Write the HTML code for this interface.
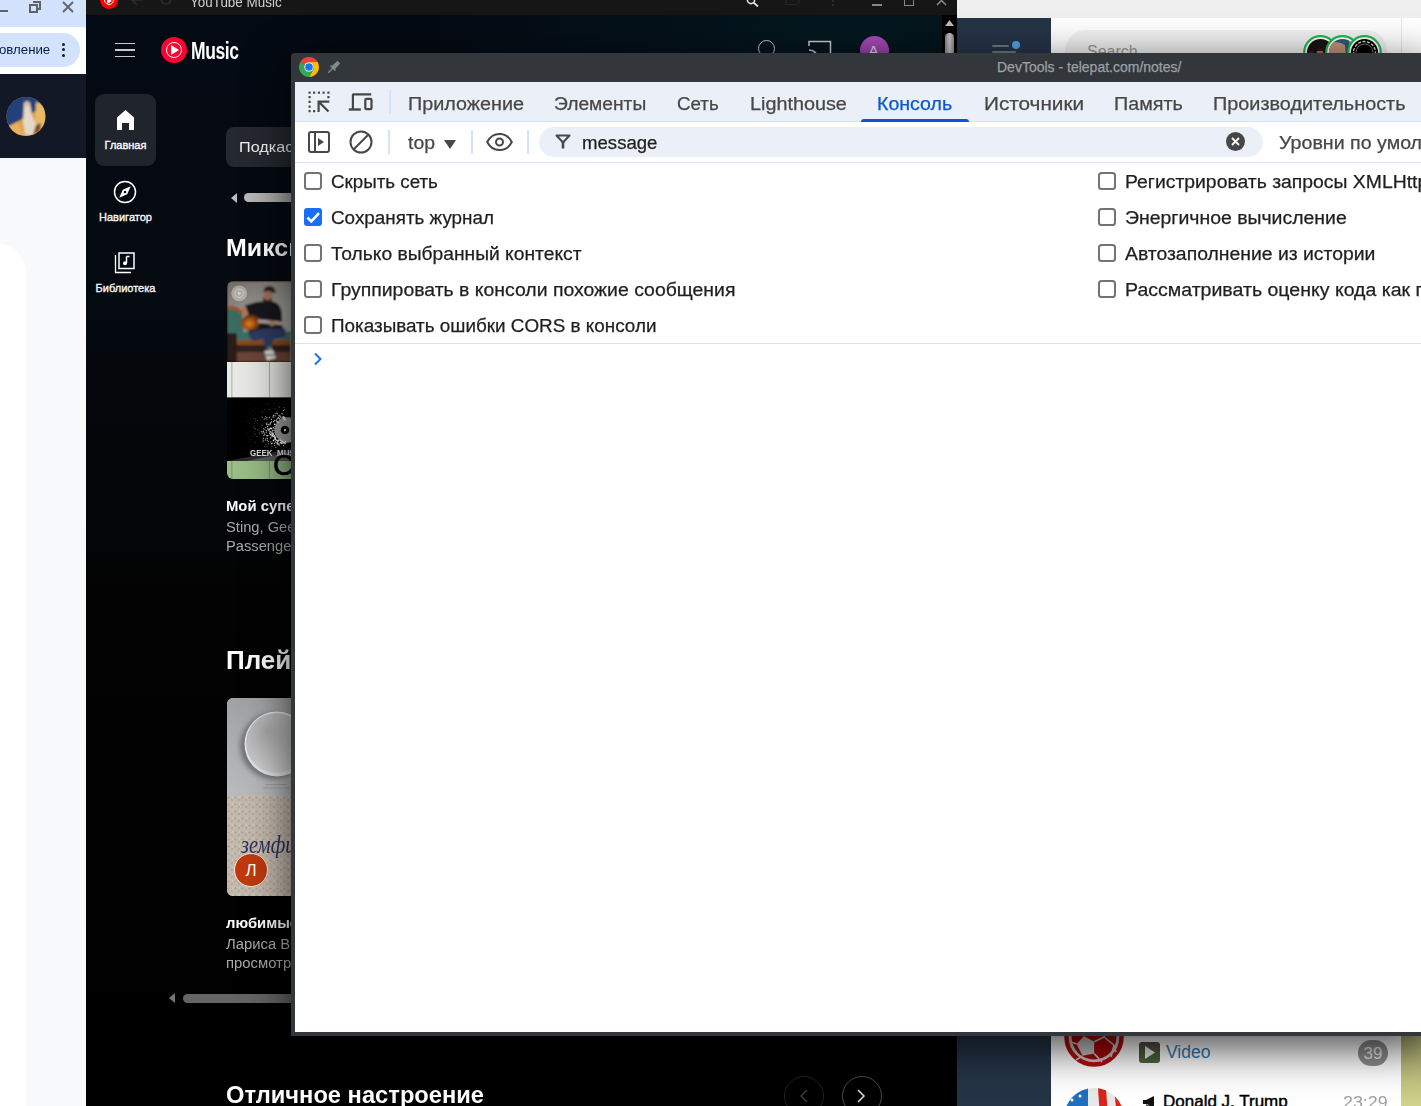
<!DOCTYPE html>
<html><head><meta charset="utf-8">
<style>
*{margin:0;padding:0;box-sizing:border-box}
html,body{width:1421px;height:1106px;overflow:hidden;background:#000;font-family:"Liberation Sans",sans-serif}
.a{position:absolute}
.t{position:absolute;white-space:nowrap;line-height:1}
</style></head><body>

<!-- ============ LEFT CHROME WINDOW ============ -->
<div class="a" style="left:0;top:0;width:86px;height:1106px;background:#f8f9fb;overflow:hidden" id="chromeL">
  <div class="a" style="left:0;top:0;width:86px;height:27px;background:#d3e3fd"></div>
  <div class="a" style="left:0;top:27px;width:86px;height:47px;background:#fff;border-top-right-radius:8px"></div>
  <div class="a" style="left:-40px;top:33px;width:120px;height:34px;background:#d3e3fd;border-radius:17px"></div>
  <div class="t" style="left:-1px;top:43px;font-size:13.5px;color:#041e49;transform:scaleX(.98);transform-origin:0 0">овление</div>
  <div class="a" style="left:62px;top:43px;width:3px;height:3px;border-radius:2px;background:#041e49"></div>
  <div class="a" style="left:62px;top:48px;width:3px;height:3px;border-radius:2px;background:#041e49"></div>
  <div class="a" style="left:62px;top:54px;width:3px;height:3px;border-radius:2px;background:#041e49"></div>
  <!-- window controls -->
  <div class="a" style="left:0;top:10px;width:8px;height:2px;background:#5f6368"></div>
  <svg class="a" style="left:29px;top:1px" width="12" height="12" viewBox="0 0 12 12"><path d="M4 1h7v7h-2M1 4h7v7H1z" fill="none" stroke="#5f6368" stroke-width="2"/></svg>
  <svg class="a" style="left:62px;top:1px" width="12" height="12" viewBox="0 0 12 12"><path d="M1 1l10 10M11 1L1 11" stroke="#5f6368" stroke-width="1.8"/></svg>
  <!-- dark band -->
  <div class="a" style="left:0;top:74px;width:86px;height:84px;background:#121826"></div>
  <svg class="a" style="left:6px;top:97px" width="40" height="40" viewBox="0 0 40 40"><defs><clipPath id="av"><circle cx="20" cy="19.5" r="19.4"/></clipPath><filter id="avb"><feGaussianBlur stdDeviation="1"/></filter></defs><g clip-path="url(#av)"><rect width="40" height="40" fill="#d9a250"/><g filter="url(#avb)"><path d="M-2 -2H40V8L30 14L12 24L-2 32z" fill="#24407a"/><path d="M30 5L40 8V40H28z" fill="#e8b868"/><path d="M18 6Q21 3 24 6L26 18L30 28L27 38H19L17 26z" fill="#e6d8c8"/><circle cx="21" cy="7" r="2.8" fill="#d8c0a0"/><path d="M30 28L35 26L34 34L27 38z" fill="#7a4a20"/><path d="M0 30L12 26L18 40H0z" fill="#e8b060"/></g></g></svg>
  <div class="a" style="left:-60px;top:244px;width:86px;height:900px;background:#fff;border-radius:28px"></div>
</div>

<!-- ============ YOUTUBE MUSIC ============ -->
<div class="a" style="left:86px;top:0;width:871px;height:1106px;overflow:hidden;background:linear-gradient(180deg,#040a14 0,#050a10 300px,#030303 600px,#000 1106px)" id="ytm">
  <div class="a" style="left:0;top:0;width:871px;height:400px;background:radial-gradient(ellipse 420px 260px at 760px 30px,rgba(4,28,34,.75),rgba(4,20,28,0) 100%)"></div>
  <div class="a" style="left:0;top:0;width:871px;height:15px;background:#161616"></div>
  <div class="a" style="left:14px;top:-9px;width:18px;height:18px;border-radius:50%;background:#f00"></div>
  <div class="a" style="left:18px;top:-5px;width:10px;height:10px;border-radius:50%;border:1px solid #fff"></div>
  <svg class="a" style="left:21px;top:-2px" width="6" height="6" viewBox="0 0 6 6"><path d="M0 0L5 3L0 6z" fill="#fff"/></svg>
  <svg class="a" style="left:44px;top:-6px" width="14" height="12" viewBox="0 0 14 12"><path d="M13 6H2M7 1L2 6l5 5" fill="none" stroke="#2e2e2e" stroke-width="1.5"/></svg>
  <svg class="a" style="left:73px;top:-6px" width="14" height="12" viewBox="0 0 14 12"><circle cx="7" cy="5" r="5" fill="none" stroke="#2e2e2e" stroke-width="1.5"/></svg>
  <div class="t" style="left:104px;top:-5px;font-size:14px;color:#d0d0d0;transform:scaleX(.96);transform-origin:0 0">YouTube Music</div>
  <svg class="a" style="left:660px;top:-4px" width="14" height="11" viewBox="0 0 14 11"><circle cx="5" cy="4" r="3.6" fill="none" stroke="#ddd" stroke-width="1.6"/><path d="M7.5 6.5L12 10.5" stroke="#ddd" stroke-width="1.8"/></svg>
  <div class="a" style="left:700px;top:-6px;width:14px;height:11px;border:1.5px solid #262626;border-radius:2px;transform:skewX(-15deg)"></div>
  <div class="a" style="left:746px;top:0;width:2px;height:2px;background:#2a2a2a"></div><div class="a" style="left:746px;top:4px;width:2px;height:2px;background:#2a2a2a"></div>
  <div class="a" style="left:786px;top:4px;width:10px;height:1.5px;background:#888"></div>
  <div class="a" style="left:818px;top:-6px;width:10px;height:12px;border:1.5px solid #888"></div>
  <svg class="a" style="left:850px;top:-5px" width="11" height="11" viewBox="0 0 11 11"><path d="M1 1l9 9M10 1L1 10" stroke="#888" stroke-width="1.5"/></svg>
  <!-- hamburger -->
  <div class="a" style="left:29px;top:42.5px;width:20px;height:1.6px;background:#c8c8c8"></div>
  <div class="a" style="left:29px;top:49px;width:20px;height:1.6px;background:#c8c8c8"></div>
  <div class="a" style="left:29px;top:55.5px;width:20px;height:1.6px;background:#c8c8c8"></div>
  <!-- logo -->
  <div class="a" style="left:75px;top:37px;width:26px;height:26px;border-radius:50%;background:#ff0033"></div>
  <div class="a" style="left:80px;top:42px;width:16px;height:16px;border-radius:50%;border:1px solid #fff"></div>
  <svg class="a" style="left:85px;top:45px" width="9" height="10" viewBox="0 0 9 10"><path d="M0 0L8 5L0 10z" fill="#fff"/></svg>
  <div class="t" style="left:105px;top:40px;font-size:23px;font-weight:bold;color:#fff;transform:scaleX(0.76);transform-origin:0 0;letter-spacing:-0.5px">Music</div>
  <!-- sidebar -->
  <div class="a" style="left:9px;top:94px;width:61px;height:72px;border-radius:9px;background:#20242c"></div>
  <svg class="a" style="left:30px;top:110px" width="19" height="20" viewBox="0 0 19 20"><path d="M9.5 0L18 7.5V20H13V13H6V20H1V7.5z" fill="#fff"/></svg>
  <div class="t" style="left:0;width:79px;text-align:center;top:140px;font-size:11px;font-weight:normal;-webkit-text-stroke:0.35px #fff;color:#fff">Главная</div>
  <svg class="a" style="left:27px;top:180px" width="24" height="24" viewBox="0 0 24 24"><circle cx="12" cy="12" r="10.5" fill="none" stroke="#fff" stroke-width="1.5"/><path d="M17.8 6.2L14.2 14.2L6.2 17.8L9.8 9.8z" fill="#fff"/><circle cx="12" cy="12" r="1.3" fill="#0a0e14"/></svg>
  <div class="t" style="left:0;width:79px;text-align:center;top:212px;font-size:11px;font-weight:normal;-webkit-text-stroke:0.35px #fff;color:#eee">Навигатор</div>
  <svg class="a" style="left:28px;top:252px" width="22" height="22" viewBox="0 0 22 22"><path d="M1.5 3v17.5H17" fill="none" stroke="#fff" stroke-width="1.3"/><rect x="5" y="1" width="15" height="15.5" fill="none" stroke="#fff" stroke-width="1.5"/><path d="M12.5 4.5v6.5" stroke="#fff" stroke-width="1.5"/><path d="M12.5 4.5h3" stroke="#fff" stroke-width="1.5"/><circle cx="11" cy="11.3" r="2" fill="#fff"/></svg>
  <div class="t" style="left:0;width:79px;text-align:center;top:283px;font-size:11px;font-weight:normal;-webkit-text-stroke:0.35px #fff;color:#eee">Библиотека</div>

  <!-- chip -->
  <div class="a" style="left:140px;top:127px;width:120px;height:40px;border-radius:8px;background:#25282e"></div>
  <div class="t" style="left:153px;top:139px;font-size:15px;color:#f0f0f0;transform:scaleX(1.08);transform-origin:0 0">Подкасты</div>
  <!-- scroll bar top -->
  <svg class="a" style="left:145px;top:193px" width="6" height="10" viewBox="0 0 6 10"><path d="M6 0V10L0 5z" fill="#bbb"/></svg>
  <div class="a" style="left:158px;top:193px;width:200px;height:9px;border-radius:5px;background:linear-gradient(90deg,#b8b8b8,#6a6a6a)"></div>
  <!-- Микс heading -->
  <div class="t" style="left:140px;top:236px;font-size:24px;font-weight:bold;color:#fff;transform:scaleX(1.04);transform-origin:0 0">Миксы</div>
  <!-- card 1 -->
  <div class="a" style="left:141px;top:281px;width:160px;height:198px;border-radius:6px;overflow:hidden;background:#000">
  <svg class="a" style="left:0;top:0" width="160" height="198" viewBox="0 0 160 198">
    <defs>
      <linearGradient id="wall" x1="0" y1="0" x2="1" y2="1"><stop offset="0" stop-color="#6f6a63"/><stop offset=".35" stop-color="#a3a39e"/><stop offset="1" stop-color="#b2b2ad"/></linearGradient>
      <radialGradient id="gtr" cx=".4" cy=".55" r=".65"><stop offset="0" stop-color="#e08a28"/><stop offset=".45" stop-color="#a8500e"/><stop offset="1" stop-color="#2a1406"/></radialGradient>
      <linearGradient id="pan" x1="0" y1="0" x2="1" y2="0"><stop offset="0" stop-color="#e9eae5"/><stop offset=".6" stop-color="#dcdcd8"/><stop offset="1" stop-color="#8a8a88"/></linearGradient>
      <radialGradient id="dots" cx="1" cy=".5" r=".9"><stop offset="0" stop-color="#f0f0f0"/><stop offset=".5" stop-color="#b0b0b0"/><stop offset=".8" stop-color="#444"/><stop offset="1" stop-color="#000"/></radialGradient>
      <linearGradient id="grn" x1="0" y1="0" x2="1" y2="0"><stop offset="0" stop-color="#9ac088"/><stop offset="1" stop-color="#7c9c6d"/></linearGradient>
    </defs>
    <defs><filter id="bl" x="-5%" y="-5%" width="110%" height="110%"><feGaussianBlur stdDeviation=".8"/></filter></defs><g filter="url(#bl)"><rect width="160" height="81" fill="url(#wall)"/>
    <path d="M0 28Q8 25 15.3 34L17 58H0z" fill="#3b6a5f"/>
    <path d="M0 27Q9 24 15.3 33" stroke="#a0501a" stroke-width="3.2" fill="none"/>
    <rect x="0" y="50.5" width="64" height="8.7" fill="#3e6e66"/>
    <rect x="6" y="59" width="58" height="5" fill="#8a4a1c"/>
    <rect x="0" y="64" width="64" height="7" fill="#2e2420"/>
    <rect x="0" y="71" width="64" height="10" fill="#6a4438"/>
    <path d="M0 52H10V81H0z" fill="#2a1c14"/>
    <path d="M17.7 24.5Q30 20 36 20.5L46 20.5Q53 22 54.6 30L56 50L22 52L19 38z" fill="#18181a"/>
    <path d="M13.7 27L18.5 25L24 40L19.5 42z" fill="#a87a62"/>
    <path d="M36.5 11Q37 4 43 5Q49 6 48.5 12L46 12Q43 9 38 11z" fill="#2a1a12"/>
    <path d="M36 11.5Q41 9 46 12L45.2 19L41 21L36 18z" fill="#a07058"/>
    <path d="M35.5 16Q40 22 45 17L44.4 21Q40 23 36.5 20.6z" fill="#2e1e14"/>
    <ellipse cx="24" cy="41.5" rx="10" ry="8" fill="url(#gtr)" transform="rotate(-15 24 41.5)"/>
    <path d="M31 40L61 43" stroke="#b0a09a" stroke-width="3.6"/>
    <circle cx="45" cy="42.6" r="2.6" fill="#a87a62"/>
    <path d="M20.8 53.6Q30 47 42 47.4L58.6 47.4L57.8 56L47 58L43 67.8L38 66L36 58L26 60z" fill="#2e3a60"/>
    <path d="M40.5 65.5L45.2 65.5L45 70.2L40 70.2z" fill="#6a7a6a"/>
    <path d="M37.3 70L46 69L49 77L40 79.6z" fill="#d4d8d0"/>
    <path d="M38 74L48 74" stroke="#333" stroke-width="1"/>
</g>
    <circle cx="12.2" cy="12.3" r="7.9" fill="#fff" fill-opacity=".35"/>
    <circle cx="12.2" cy="12.3" r="4.3" fill="none" stroke="#fff" stroke-opacity=".45" stroke-width=".8"/>
    <path d="M11 10.2L14.2 12.3L11 14.4z" fill="#fff" fill-opacity=".5"/>
    <rect y="81" width="160" height="35.5" fill="url(#pan)"/>
    <rect x="4.5" y="81" width=".8" height="35.5" fill="#999"/>
    <rect x="42" y="81" width=".8" height="35.5" fill="#999"/>
    <rect y="116" width="160" height="1.5" fill="#555"/>
    <rect y="117" width="160" height="63" fill="#000"/>
    <path d="M0 180L64 168V180z" fill="#555" opacity=".5"/>
    <path d="M20 180L64 171V180z" fill="#888" opacity=".5"/>
    <circle cx="60" cy="149" r="12.5" fill="#9a9a9a"/>
    <circle cx="60" cy="149" r="12.5" fill="none" stroke="#bbb" stroke-width="1" stroke-dasharray="1 1"/>
    <rect x="35.6" y="160.4" width="0.8" height="0.8" fill="#fff" fill-opacity="0.70"/>
    <rect x="41.8" y="147.5" width="1.2" height="1.2" fill="#fff" fill-opacity="0.92"/>
    <rect x="41.2" y="148.7" width="1.2" height="1.2" fill="#fff" fill-opacity="0.91"/>
    <rect x="55.9" y="164.0" width="1.1" height="1.1" fill="#fff" fill-opacity="0.88"/>
    <rect x="53.7" y="161.0" width="1.2" height="1.2" fill="#fff" fill-opacity="0.95"/>
    <rect x="42.0" y="152.2" width="1.2" height="1.2" fill="#fff" fill-opacity="0.92"/>
    <rect x="45.1" y="161.6" width="1.0" height="1.0" fill="#fff" fill-opacity="0.84"/>
    <rect x="27.9" y="138.5" width="0.6" height="0.6" fill="#fff" fill-opacity="0.57"/>
    <rect x="39.6" y="154.1" width="1.1" height="1.1" fill="#fff" fill-opacity="0.85"/>
    <rect x="40.8" y="160.1" width="1.0" height="1.0" fill="#fff" fill-opacity="0.80"/>
    <rect x="48.0" y="166.0" width="0.9" height="0.9" fill="#fff" fill-opacity="0.78"/>
    <rect x="46.0" y="133.8" width="1.0" height="1.0" fill="#fff" fill-opacity="0.80"/>
    <rect x="36.0" y="156.7" width="0.9" height="0.9" fill="#fff" fill-opacity="0.75"/>
    <rect x="40.3" y="146.8" width="1.1" height="1.1" fill="#fff" fill-opacity="0.89"/>
    <rect x="49.1" y="158.8" width="1.2" height="1.2" fill="#fff" fill-opacity="0.95"/>
    <rect x="36.7" y="137.8" width="0.9" height="0.9" fill="#fff" fill-opacity="0.73"/>
    <rect x="39.9" y="144.9" width="1.1" height="1.1" fill="#fff" fill-opacity="0.87"/>
    <rect x="36.8" y="151.6" width="1.0" height="1.0" fill="#fff" fill-opacity="0.81"/>
    <rect x="25.6" y="129.7" width="0.4" height="0.4" fill="#fff" fill-opacity="0.41"/>
    <rect x="49.8" y="132.6" width="1.0" height="1.0" fill="#fff" fill-opacity="0.81"/>
    <rect x="40.5" y="136.3" width="0.9" height="0.9" fill="#fff" fill-opacity="0.77"/>
    <rect x="45.4" y="151.7" width="1.3" height="1.3" fill="#fff" fill-opacity="0.99"/>
    <rect x="36.1" y="149.6" width="1.0" height="1.0" fill="#fff" fill-opacity="0.80"/>
    <rect x="22.5" y="142.1" width="0.5" height="0.5" fill="#fff" fill-opacity="0.48"/>
    <rect x="49.5" y="131.9" width="1.0" height="1.0" fill="#fff" fill-opacity="0.79"/>
    <rect x="24.0" y="140.4" width="0.5" height="0.5" fill="#fff" fill-opacity="0.50"/>
    <rect x="54.4" y="131.9" width="1.0" height="1.0" fill="#fff" fill-opacity="0.82"/>
    <rect x="42.5" y="150.0" width="1.2" height="1.2" fill="#fff" fill-opacity="0.94"/>
    <rect x="43.9" y="140.4" width="1.1" height="1.1" fill="#fff" fill-opacity="0.89"/>
    <rect x="19.9" y="133.3" width="0.4" height="0.4" fill="#fff" fill-opacity="0.35"/>
    <rect x="47.1" y="156.2" width="1.3" height="1.3" fill="#fff" fill-opacity="0.97"/>
    <rect x="44.6" y="153.2" width="1.2" height="1.2" fill="#fff" fill-opacity="0.96"/>
    <rect x="42.5" y="150.6" width="1.2" height="1.2" fill="#fff" fill-opacity="0.93"/>
    <rect x="49.5" y="161.0" width="1.2" height="1.2" fill="#fff" fill-opacity="0.91"/>
    <rect x="47.1" y="138.9" width="1.2" height="1.2" fill="#fff" fill-opacity="0.92"/>
    <rect x="52.9" y="158.8" width="1.3" height="1.3" fill="#fff" fill-opacity="0.99"/>
    <rect x="46.7" y="127.2" width="0.7" height="0.7" fill="#fff" fill-opacity="0.65"/>
    <rect x="51.2" y="134.3" width="1.1" height="1.1" fill="#fff" fill-opacity="0.86"/>
    <rect x="46.6" y="134.2" width="1.0" height="1.0" fill="#fff" fill-opacity="0.81"/>
    <rect x="36.3" y="153.9" width="1.0" height="1.0" fill="#fff" fill-opacity="0.79"/>
    <rect x="19.3" y="164.2" width="0.4" height="0.4" fill="#fff" fill-opacity="0.35"/>
    <rect x="50.7" y="158.8" width="1.3" height="1.3" fill="#fff" fill-opacity="0.97"/>
    <rect x="33.7" y="149.9" width="0.9" height="0.9" fill="#fff" fill-opacity="0.75"/>
    <rect x="45.7" y="146.1" width="1.3" height="1.3" fill="#fff" fill-opacity="1.00"/>
    <rect x="44.4" y="151.9" width="1.2" height="1.2" fill="#fff" fill-opacity="0.97"/>
    <rect x="34.2" y="135.6" width="0.7" height="0.7" fill="#fff" fill-opacity="0.65"/>
    <rect x="27.5" y="147.8" width="0.7" height="0.7" fill="#fff" fill-opacity="0.61"/>
    <rect x="52.2" y="134.2" width="1.1" height="1.1" fill="#fff" fill-opacity="0.87"/>
    <rect x="31.4" y="119.2" width="0.4" height="0.4" fill="#fff" fill-opacity="0.35"/>
    <rect x="40.3" y="154.1" width="1.1" height="1.1" fill="#fff" fill-opacity="0.87"/>
    <rect x="42.4" y="143.2" width="1.1" height="1.1" fill="#fff" fill-opacity="0.90"/>
    <rect x="49.6" y="161.4" width="1.1" height="1.1" fill="#fff" fill-opacity="0.90"/>
    <rect x="46.6" y="154.2" width="1.3" height="1.3" fill="#fff" fill-opacity="0.99"/>
    <rect x="52.2" y="158.4" width="1.3" height="1.3" fill="#fff" fill-opacity="1.00"/>
    <rect x="53.3" y="160.8" width="1.2" height="1.2" fill="#fff" fill-opacity="0.95"/>
    <rect x="52.1" y="137.2" width="1.2" height="1.2" fill="#fff" fill-opacity="0.94"/>
    <rect x="39.3" y="143.2" width="1.0" height="1.0" fill="#fff" fill-opacity="0.84"/>
    <rect x="38.0" y="157.6" width="1.0" height="1.0" fill="#fff" fill-opacity="0.79"/>
    <rect x="26.1" y="161.0" width="0.5" height="0.5" fill="#fff" fill-opacity="0.51"/>
    <rect x="57.3" y="120.5" width="0.5" height="0.5" fill="#fff" fill-opacity="0.53"/>
    <rect x="38.7" y="150.7" width="1.1" height="1.1" fill="#fff" fill-opacity="0.85"/>
    <rect x="53.8" y="159.5" width="1.3" height="1.3" fill="#fff" fill-opacity="0.98"/>
    <rect x="44.4" y="155.1" width="1.2" height="1.2" fill="#fff" fill-opacity="0.94"/>
    <rect x="49.7" y="162.8" width="1.1" height="1.1" fill="#fff" fill-opacity="0.87"/>
    <rect x="26.2" y="145.4" width="0.6" height="0.6" fill="#fff" fill-opacity="0.58"/>
    <rect x="56.9" y="135.8" width="1.2" height="1.2" fill="#fff" fill-opacity="0.93"/>
    <rect x="51.0" y="136.4" width="1.2" height="1.2" fill="#fff" fill-opacity="0.91"/>
    <rect x="35.6" y="157.2" width="0.9" height="0.9" fill="#fff" fill-opacity="0.74"/>
    <rect x="50.3" y="160.0" width="1.2" height="1.2" fill="#fff" fill-opacity="0.94"/>
    <rect x="37.3" y="128.5" width="0.6" height="0.6" fill="#fff" fill-opacity="0.57"/>
    <rect x="42.9" y="156.4" width="1.1" height="1.1" fill="#fff" fill-opacity="0.89"/>
    <rect x="47.8" y="132.1" width="0.9" height="0.9" fill="#fff" fill-opacity="0.78"/>
    <rect x="28.4" y="126.1" width="0.4" height="0.4" fill="#fff" fill-opacity="0.39"/>
    <rect x="56.7" y="160.8" width="1.2" height="1.2" fill="#fff" fill-opacity="0.96"/>
    <rect x="56.7" y="161.3" width="1.2" height="1.2" fill="#fff" fill-opacity="0.95"/>
    <rect x="37.5" y="137.3" width="0.9" height="0.9" fill="#fff" fill-opacity="0.73"/>
    <rect x="57.1" y="128.4" width="0.9" height="0.9" fill="#fff" fill-opacity="0.73"/>
    <rect x="55.2" y="132.5" width="1.0" height="1.0" fill="#fff" fill-opacity="0.84"/>
    <rect x="44.1" y="162.2" width="1.0" height="1.0" fill="#fff" fill-opacity="0.81"/>
    <rect x="47.0" y="161.8" width="1.1" height="1.1" fill="#fff" fill-opacity="0.86"/>
    <rect x="47.4" y="122.1" width="0.5" height="0.5" fill="#fff" fill-opacity="0.53"/>
    <rect x="40.8" y="123.0" width="0.5" height="0.5" fill="#fff" fill-opacity="0.50"/>
    <rect x="48.8" y="138.5" width="1.2" height="1.2" fill="#fff" fill-opacity="0.93"/>
    <rect x="31.1" y="121.8" width="0.4" height="0.4" fill="#fff" fill-opacity="0.35"/>
    <rect x="42.0" y="135.8" width="1.0" height="1.0" fill="#fff" fill-opacity="0.78"/>
    <rect x="49.4" y="139.9" width="1.3" height="1.3" fill="#fff" fill-opacity="0.97"/>
    <rect x="35.4" y="159.8" width="0.8" height="0.8" fill="#fff" fill-opacity="0.71"/>
    <rect x="22.7" y="158.3" width="0.5" height="0.5" fill="#fff" fill-opacity="0.47"/>
    <rect x="47.2" y="164.0" width="1.0" height="1.0" fill="#fff" fill-opacity="0.82"/>
    <rect x="34.6" y="121.2" width="0.4" height="0.4" fill="#fff" fill-opacity="0.38"/>
    <rect x="39.5" y="156.8" width="1.0" height="1.0" fill="#fff" fill-opacity="0.82"/>
    <rect x="57.3" y="161.6" width="1.2" height="1.2" fill="#fff" fill-opacity="0.94"/>
    <rect x="55.8" y="129.0" width="0.9" height="0.9" fill="#fff" fill-opacity="0.75"/>
    <rect x="52.1" y="125.9" width="0.7" height="0.7" fill="#fff" fill-opacity="0.65"/>
    <rect x="25.2" y="154.7" width="0.6" height="0.6" fill="#fff" fill-opacity="0.55"/>
    <rect x="46.7" y="158.2" width="1.2" height="1.2" fill="#fff" fill-opacity="0.93"/>
    <rect x="34.7" y="143.6" width="0.9" height="0.9" fill="#fff" fill-opacity="0.75"/>
    <rect x="43.4" y="160.4" width="1.0" height="1.0" fill="#fff" fill-opacity="0.84"/>
    <rect x="53.3" y="135.7" width="1.2" height="1.2" fill="#fff" fill-opacity="0.91"/>
    <rect x="28.2" y="161.2" width="0.6" height="0.6" fill="#fff" fill-opacity="0.55"/>
    <rect x="52.6" y="134.7" width="1.1" height="1.1" fill="#fff" fill-opacity="0.88"/>
    <rect x="29.7" y="154.9" width="0.7" height="0.7" fill="#fff" fill-opacity="0.64"/>
    <rect x="36.1" y="147.2" width="1.0" height="1.0" fill="#fff" fill-opacity="0.80"/>
    <rect x="28.2" y="147.2" width="0.7" height="0.7" fill="#fff" fill-opacity="0.63"/>
    <rect x="50.0" y="159.2" width="1.2" height="1.2" fill="#fff" fill-opacity="0.96"/>
    <rect x="57.8" y="161.9" width="1.2" height="1.2" fill="#fff" fill-opacity="0.93"/>
    <rect x="36.0" y="150.5" width="1.0" height="1.0" fill="#fff" fill-opacity="0.79"/>
    <rect x="38.2" y="135.0" width="0.8" height="0.8" fill="#fff" fill-opacity="0.71"/>
    <rect x="40.4" y="148.2" width="1.1" height="1.1" fill="#fff" fill-opacity="0.89"/>
    <rect x="43.9" y="147.0" width="1.2" height="1.2" fill="#fff" fill-opacity="0.96"/>
    <rect x="38.3" y="145.9" width="1.0" height="1.0" fill="#fff" fill-opacity="0.84"/>
    <rect x="45.8" y="159.2" width="1.1" height="1.1" fill="#fff" fill-opacity="0.90"/>
    <rect x="18.1" y="148.2" width="0.4" height="0.4" fill="#fff" fill-opacity="0.41"/>
    <rect x="43.4" y="146.6" width="1.2" height="1.2" fill="#fff" fill-opacity="0.95"/>
    <rect x="28.0" y="139.9" width="0.6" height="0.6" fill="#fff" fill-opacity="0.58"/>
    <rect x="47.0" y="142.7" width="1.3" height="1.3" fill="#fff" fill-opacity="0.99"/>
    <rect x="27.7" y="152.8" width="0.7" height="0.7" fill="#fff" fill-opacity="0.61"/>
    <rect x="55.0" y="135.6" width="1.2" height="1.2" fill="#fff" fill-opacity="0.92"/>
    <rect x="25.5" y="129.6" width="0.4" height="0.4" fill="#fff" fill-opacity="0.40"/>
    <rect x="51.1" y="163.2" width="1.1" height="1.1" fill="#fff" fill-opacity="0.87"/>
    <rect x="47.8" y="157.9" width="1.2" height="1.2" fill="#fff" fill-opacity="0.95"/>
    <rect x="46.1" y="119.8" width="0.4" height="0.4" fill="#fff" fill-opacity="0.46"/>
    <rect x="49.8" y="161.9" width="1.1" height="1.1" fill="#fff" fill-opacity="0.89"/>
    <rect x="49.5" y="130.7" width="0.9" height="0.9" fill="#fff" fill-opacity="0.76"/>
    <rect x="55.8" y="136.8" width="1.2" height="1.2" fill="#fff" fill-opacity="0.95"/>
    <rect x="49.7" y="137.2" width="1.2" height="1.2" fill="#fff" fill-opacity="0.92"/>
    <rect x="39.9" y="157.3" width="1.0" height="1.0" fill="#fff" fill-opacity="0.82"/>
    <rect x="44.5" y="164.8" width="0.9" height="0.9" fill="#fff" fill-opacity="0.77"/>
    <rect x="42.7" y="146.8" width="1.2" height="1.2" fill="#fff" fill-opacity="0.94"/>
    <rect x="46.1" y="154.7" width="1.3" height="1.3" fill="#fff" fill-opacity="0.98"/>
    <rect x="40.9" y="143.2" width="1.1" height="1.1" fill="#fff" fill-opacity="0.87"/>
    <rect x="57.4" y="138.2" width="1.3" height="1.3" fill="#fff" fill-opacity="0.99"/>
    <rect x="45.6" y="135.9" width="1.0" height="1.0" fill="#fff" fill-opacity="0.84"/>
    <rect x="47.6" y="156.8" width="1.3" height="1.3" fill="#fff" fill-opacity="0.97"/>
    <rect x="56.1" y="161.3" width="1.2" height="1.2" fill="#fff" fill-opacity="0.95"/>
    <rect x="21.2" y="156.6" width="0.4" height="0.4" fill="#fff" fill-opacity="0.45"/>
    <rect x="37.4" y="165.1" width="0.8" height="0.8" fill="#fff" fill-opacity="0.66"/>
    <rect x="39.5" y="137.9" width="0.9" height="0.9" fill="#fff" fill-opacity="0.78"/>
    <rect x="37.2" y="153.1" width="1.0" height="1.0" fill="#fff" fill-opacity="0.81"/>
    <rect x="45.6" y="134.7" width="1.0" height="1.0" fill="#fff" fill-opacity="0.81"/>
    <rect x="53.7" y="162.0" width="1.2" height="1.2" fill="#fff" fill-opacity="0.92"/>
    <rect x="50.8" y="136.0" width="1.1" height="1.1" fill="#fff" fill-opacity="0.90"/>
    <rect x="34.7" y="151.8" width="0.9" height="0.9" fill="#fff" fill-opacity="0.76"/>
    <rect x="51.2" y="124.9" width="0.7" height="0.7" fill="#fff" fill-opacity="0.62"/>
    <rect x="38.5" y="163.4" width="0.8" height="0.8" fill="#fff" fill-opacity="0.71"/>
    <rect x="39.7" y="165.3" width="0.8" height="0.8" fill="#fff" fill-opacity="0.69"/>
    <rect x="52.8" y="161.0" width="1.2" height="1.2" fill="#fff" fill-opacity="0.94"/>
    <rect x="47.9" y="160.3" width="1.1" height="1.1" fill="#fff" fill-opacity="0.90"/>
    <rect x="39.8" y="159.1" width="1.0" height="1.0" fill="#fff" fill-opacity="0.80"/>
    <rect x="38.8" y="149.0" width="1.1" height="1.1" fill="#fff" fill-opacity="0.86"/>
    <rect x="43.0" y="147.0" width="1.2" height="1.2" fill="#fff" fill-opacity="0.95"/>
    <rect x="51.9" y="163.5" width="1.1" height="1.1" fill="#fff" fill-opacity="0.87"/>
    <rect x="42.0" y="128.3" width="0.7" height="0.7" fill="#fff" fill-opacity="0.63"/>
    <rect x="47.9" y="134.4" width="1.0" height="1.0" fill="#fff" fill-opacity="0.83"/>
    <rect x="22.9" y="159.1" width="0.4" height="0.4" fill="#fff" fill-opacity="0.47"/>
    <rect x="57.2" y="137.7" width="1.3" height="1.3" fill="#fff" fill-opacity="0.98"/>
    <rect x="35.9" y="158.8" width="0.9" height="0.9" fill="#fff" fill-opacity="0.73"/>
    <rect x="26.5" y="137.2" width="0.5" height="0.5" fill="#fff" fill-opacity="0.52"/>
    <rect x="43.0" y="152.8" width="1.2" height="1.2" fill="#fff" fill-opacity="0.93"/>
    <rect x="51.2" y="161.9" width="1.1" height="1.1" fill="#fff" fill-opacity="0.90"/>
    <rect x="55.1" y="159.8" width="1.3" height="1.3" fill="#fff" fill-opacity="0.98"/>
    <rect x="23.6" y="132.1" width="0.4" height="0.4" fill="#fff" fill-opacity="0.41"/>
    <rect x="47.7" y="156.0" width="1.3" height="1.3" fill="#fff" fill-opacity="0.99"/>
    <rect x="32.2" y="151.7" width="0.8" height="0.8" fill="#fff" fill-opacity="0.71"/>
    <rect x="56.0" y="135.2" width="1.2" height="1.2" fill="#fff" fill-opacity="0.91"/>
    <rect x="55.9" y="129.1" width="0.9" height="0.9" fill="#fff" fill-opacity="0.75"/>
    <rect x="56.3" y="135.7" width="1.2" height="1.2" fill="#fff" fill-opacity="0.92"/>
    <rect x="47.2" y="155.1" width="1.3" height="1.3" fill="#fff" fill-opacity="0.99"/>
    <rect x="45.7" y="153.0" width="1.3" height="1.3" fill="#fff" fill-opacity="0.99"/>
    <rect x="34.6" y="150.5" width="0.9" height="0.9" fill="#fff" fill-opacity="0.77"/>
    <rect x="45.2" y="148.8" width="1.3" height="1.3" fill="#fff" fill-opacity="1.00"/>
    <rect x="57.8" y="160.0" width="1.3" height="1.3" fill="#fff" fill-opacity="0.99"/>
    <rect x="39.4" y="154.0" width="1.1" height="1.1" fill="#fff" fill-opacity="0.85"/>
    <rect x="48.3" y="158.0" width="1.2" height="1.2" fill="#fff" fill-opacity="0.96"/>
    <rect x="20.4" y="140.4" width="0.4" height="0.4" fill="#fff" fill-opacity="0.43"/>
    <rect x="42.6" y="142.1" width="1.1" height="1.1" fill="#fff" fill-opacity="0.89"/>
    <rect x="39.1" y="136.4" width="0.9" height="0.9" fill="#fff" fill-opacity="0.75"/>
    <rect x="37.8" y="159.2" width="0.9" height="0.9" fill="#fff" fill-opacity="0.76"/>
    <rect x="56.7" y="126.0" width="0.8" height="0.8" fill="#fff" fill-opacity="0.67"/>
    <rect x="27.8" y="137.0" width="0.6" height="0.6" fill="#fff" fill-opacity="0.55"/>
    <rect x="19.5" y="135.5" width="0.4" height="0.4" fill="#fff" fill-opacity="0.37"/>
    <rect x="46.1" y="140.1" width="1.2" height="1.2" fill="#fff" fill-opacity="0.93"/>
    <rect x="37.3" y="147.7" width="1.0" height="1.0" fill="#fff" fill-opacity="0.82"/>
    <rect x="30.6" y="148.7" width="0.8" height="0.8" fill="#fff" fill-opacity="0.68"/>
    <rect x="38.4" y="122.4" width="0.4" height="0.4" fill="#fff" fill-opacity="0.46"/>
    <rect x="27.4" y="142.2" width="0.6" height="0.6" fill="#fff" fill-opacity="0.59"/>
    <rect x="35.1" y="135.9" width="0.8" height="0.8" fill="#fff" fill-opacity="0.67"/>
    <rect x="44.1" y="162.1" width="1.0" height="1.0" fill="#fff" fill-opacity="0.82"/>
    <rect x="45.0" y="154.0" width="1.2" height="1.2" fill="#fff" fill-opacity="0.96"/>
    <rect x="30.1" y="139.2" width="0.7" height="0.7" fill="#fff" fill-opacity="0.62"/>
    <rect x="39.1" y="142.5" width="1.0" height="1.0" fill="#fff" fill-opacity="0.83"/>
    <rect x="50.4" y="140.5" width="1.3" height="1.3" fill="#fff" fill-opacity="1.00"/>
    <rect x="26.5" y="146.1" width="0.6" height="0.6" fill="#fff" fill-opacity="0.59"/>
    <rect x="25.8" y="134.4" width="0.5" height="0.5" fill="#fff" fill-opacity="0.48"/>
    <rect x="41.4" y="162.5" width="0.9" height="0.9" fill="#fff" fill-opacity="0.77"/>
    <rect x="54.5" y="161.2" width="1.2" height="1.2" fill="#fff" fill-opacity="0.94"/>
    <rect x="35.2" y="131.4" width="0.7" height="0.7" fill="#fff" fill-opacity="0.60"/>
    <rect x="43.5" y="153.6" width="1.2" height="1.2" fill="#fff" fill-opacity="0.94"/>
    <rect x="34.3" y="150.3" width="0.9" height="0.9" fill="#fff" fill-opacity="0.76"/>
    <rect x="22.7" y="137.8" width="0.4" height="0.4" fill="#fff" fill-opacity="0.45"/>
    <rect x="39.4" y="141.6" width="1.0" height="1.0" fill="#fff" fill-opacity="0.83"/>
    <rect x="45.9" y="158.8" width="1.2" height="1.2" fill="#fff" fill-opacity="0.91"/>
    <rect x="43.8" y="137.8" width="1.1" height="1.1" fill="#fff" fill-opacity="0.85"/>
    <rect x="55.1" y="161.6" width="1.2" height="1.2" fill="#fff" fill-opacity="0.94"/>
    <rect x="27.9" y="131.9" width="0.5" height="0.5" fill="#fff" fill-opacity="0.48"/>
    <rect x="43.0" y="141.4" width="1.1" height="1.1" fill="#fff" fill-opacity="0.89"/>
    <rect x="26.8" y="151.9" width="0.6" height="0.6" fill="#fff" fill-opacity="0.59"/>
    <rect x="20.5" y="152.3" width="0.4" height="0.4" fill="#fff" fill-opacity="0.46"/>
    <rect x="56.9" y="136.3" width="1.2" height="1.2" fill="#fff" fill-opacity="0.94"/>
    <rect x="44.3" y="150.5" width="1.3" height="1.3" fill="#fff" fill-opacity="0.97"/>
    <circle cx="58" cy="149" r="4.3" fill="#000"/>
    <circle cx="58" cy="149" r="1.2" fill="#ddd"/>
    <rect y="180" width="160" height="18" fill="url(#grn)"/>
    <rect x="4.5" y="180" width=".8" height="18" fill="#6a8a5a"/>
    <rect x="42" y="180" width=".8" height="18" fill="#6a8a5a"/>
  </svg>
  <div class="t" style="left:23px;top:166.5px;font-size:9.5px;font-weight:bold;color:#e0e0e0;letter-spacing:0;transform:scaleX(.84);transform-origin:0 0">GEEK &nbsp;MUSIC</div>
  <div class="t" style="left:46px;top:170px;font-size:29px;color:#000;-webkit-text-stroke:.7px #000">C</div>
  </div>
  <div class="t" style="transform:scaleX(1.06);transform-origin:0 0;left:140px;top:499px;font-size:14px;font-weight:bold;color:#fff">Мой супермикс</div>
  <div class="t" style="transform:scaleX(1.05);transform-origin:0 0;left:140px;top:520px;font-size:14px;color:#aaa">Sting, Geek</div>
  <div class="t" style="transform:scaleX(1.05);transform-origin:0 0;left:140px;top:539px;font-size:14px;color:#aaa">Passenger</div>

  <!-- Плейлисты -->
  <div class="t" style="left:140px;top:648px;font-size:25px;font-weight:bold;color:#fff;transform:scaleX(1.04);transform-origin:0 0">Плейлисты</div>
  <div class="a" style="left:141px;top:698px;width:160px;height:198px;border-radius:6px;overflow:hidden;background:#a9abab">
  <svg class="a" style="left:0;top:0" width="160" height="198" viewBox="0 0 160 198">
    <defs>
      <linearGradient id="c2top" x1="0" y1="0" x2="0" y2="1"><stop offset="0" stop-color="#9fa1a2"/><stop offset="1" stop-color="#b9bbbc"/></linearGradient>
      <radialGradient id="plate" cx=".35" cy=".3" r=".8"><stop offset="0" stop-color="#a8a8a8"/><stop offset=".6" stop-color="#c4c4c4"/><stop offset="1" stop-color="#d8d8d8"/></radialGradient>
      <pattern id="flor" width="7" height="7" patternUnits="userSpaceOnUse"><rect width="7" height="7" fill="#bfb5aa"/><circle cx="1.5" cy="1.5" r="1.1" fill="#b88070"/><circle cx="5" cy="4" r=".9" fill="#8a9a6a"/><circle cx="2.5" cy="5.5" r=".8" fill="#d0a898"/><circle cx="5.5" cy="1" r=".7" fill="#e8ddd0"/></pattern>
    </defs>
    <rect width="160" height="98" fill="url(#c2top)"/>
    <filter id="psh"><feGaussianBlur stdDeviation="2.5"/></filter>
    <circle cx="46" cy="48" r="33" fill="#5a5c5e" opacity=".7" filter="url(#psh)"/>
    <circle cx="50" cy="46" r="32.5" fill="#e4e4e4"/>
    <circle cx="49" cy="45" r="30" fill="url(#plate)"/>
    <rect x="38" y="86" width="22" height=".8" fill="#555" opacity=".3"/>
    <rect x="36" y="89.5" width="26" height=".8" fill="#555" opacity=".3"/>
    <rect y="98" width="160" height="100" fill="url(#flor)"/>
    <rect y="98" width="160" height="100" fill="#c8c0b6" opacity=".4"/>
  </svg>
  <div class="t" style="left:14px;top:134px;font-size:25px;font-style:italic;font-family:'Liberation Serif',serif;color:#2e3058;transform:scaleX(.82);transform-origin:0 0">земфира</div>
  </div>
  <div class="a" style="left:148px;top:853px;width:34px;height:34px;border-radius:50%;background:#c0390c;border:1.5px solid #f0e8e0"></div>
  <div class="t" style="left:148px;top:862px;width:34px;text-align:center;font-size:17px;color:#fff">Л</div>
  <div class="t" style="transform:scaleX(1.06);transform-origin:0 0;left:140px;top:916px;font-size:14px;font-weight:bold;color:#fff">любимые</div>
  <div class="t" style="transform:scaleX(1.06);transform-origin:0 0;left:140px;top:937px;font-size:14px;color:#aaa">Лариса В</div>
  <div class="t" style="transform:scaleX(1.06);transform-origin:0 0;left:140px;top:956px;font-size:14px;color:#aaa">просмотры</div>
  <!-- bottom scrollbar -->
  <svg class="a" style="left:83px;top:993px" width="6" height="10" viewBox="0 0 6 10"><path d="M6 0V10L0 5z" fill="#777"/></svg>
  <div class="a" style="left:97px;top:994px;width:200px;height:9px;border-radius:5px;background:#646464"></div>
  <!-- Отличное настроение -->
  <div class="t" style="left:140px;top:1084px;font-size:23px;font-weight:bold;color:#fff;transform:scaleX(1.03);transform-origin:0 0">Отличное настроение</div>
  <div class="a" style="left:698px;top:1076px;width:40px;height:40px;border-radius:50%;border:1px solid #222"></div>
  <div class="a" style="left:756px;top:1076px;width:40px;height:40px;border-radius:50%;border:1px solid #4a4a4a"></div>
  <svg class="a" style="left:770px;top:1089px" width="10" height="14" viewBox="0 0 10 14"><path d="M2 1l6 6-6 6" fill="none" stroke="#ddd" stroke-width="1.5"/></svg>
  <svg class="a" style="left:713px;top:1089px" width="10" height="14" viewBox="0 0 10 14"><path d="M8 1L2 7l6 6" fill="none" stroke="#3a3a3a" stroke-width="1.5"/></svg>
  <!-- header right icons -->
  <div class="a" style="left:672px;top:40px;width:17px;height:17px;border-radius:50%;border:1.5px solid #ccc"></div>
  <svg class="a" style="left:722px;top:40px" width="24" height="20" viewBox="0 0 24 20"><path d="M1 6V1.5H22.5V19H13" fill="none" stroke="#ccc" stroke-width="1.5"/><path d="M1 10A9 9 0 0 1 10 19M1 14A5 5 0 0 1 6 19" fill="none" stroke="#ccc" stroke-width="1.5"/></svg>
  <div class="a" style="left:774px;top:36px;width:29px;height:29px;border-radius:50%;background:linear-gradient(180deg,#a94bbb,#8e3a9c)"></div>
  <div class="t" style="left:773px;top:43px;width:29px;text-align:center;font-size:15px;color:#ddd">A</div>
  <!-- scrollbar right -->
  <div class="a" style="left:856px;top:15px;width:15px;height:1091px;background:#000"></div>
  <svg class="a" style="left:859px;top:20px" width="9" height="6" viewBox="0 0 9 6"><path d="M0 6L4.5 0L9 6z" fill="#bbb"/></svg>
  <div class="a" style="left:859px;top:33px;width:9px;height:40px;border-radius:4.5px 4.5px 0 0;background:linear-gradient(90deg,#888,#c0c0c0 50%,#888)"></div>
</div>

<!-- ============ TELEGRAM RIGHT ============ -->
<div class="a" style="left:957px;top:0;width:464px;height:1106px;overflow:hidden;background:#fff" id="tg">
  <div class="a" style="left:0;top:0;width:464px;height:18px;background:#efefef"></div>
  <div class="a" style="left:0;top:18px;width:94px;height:1088px;background:#253447"></div>
  <div class="a" style="left:444px;top:18px;width:1px;height:1088px;background:#e6e6e6"></div>
  <div class="a" style="left:445px;top:18px;width:19px;height:1088px;background:#fff"></div>
  <div class="a" style="left:108px;top:30px;width:322px;height:42px;border-radius:21px;background:#f1f1f1"></div>
  <div class="t" style="left:130px;top:44px;font-size:16px;color:#999">Search</div>
  <div class="a" style="left:35px;top:45px;width:17px;height:2.2px;border-radius:1px;background:#6c7883"></div>
  <div class="a" style="left:35px;top:51px;width:24px;height:2.2px;border-radius:1px;background:#6c7883"></div>
  <div class="a" style="left:55px;top:41px;width:8px;height:8px;border-radius:50%;background:#4ea4e0"></div>
  <svg class="a" style="left:345.5px;top:34.5px" width="35" height="35" viewBox="0 0 35 35"><defs><clipPath id="ta1"><circle cx="17.5" cy="17.5" r="13.6"/></clipPath></defs><circle cx="17.5" cy="17.5" r="16.3" fill="#fff" stroke="#22b84c" stroke-width="2.2"/><g clip-path="url(#ta1)"><rect width="35" height="35" fill="#1a1414"/><path d="M0 20L10 16L12 35H0z" fill="#3a2e2a"/><ellipse cx="17" cy="19" rx="3.5" ry="5" fill="#b06858"/><path d="M13.5 14Q17 11 20.5 14V16H13.5z" fill="#2a1a14"/><path d="M13 24H21L24 35H10z" fill="#222"/><path d="M22 30L30 22" stroke="#8aa" stroke-width="1.2"/></g></svg>
  <svg class="a" style="left:368px;top:34.5px" width="35" height="35" viewBox="0 0 35 35"><defs><clipPath id="ta2"><circle cx="17.5" cy="17.5" r="13.6"/></clipPath></defs><circle cx="17.5" cy="17.5" r="16.3" fill="#fff" stroke="#22b84c" stroke-width="2.2"/><g clip-path="url(#ta2)"><rect width="35" height="35" fill="#2e5a78"/><path d="M0 10Q10 4 20 10L22 35H0z" fill="#c09478"/><path d="M3 22H12M14 22H22" stroke="#ccd" stroke-width="1.5"/><path d="M24 4L30 30" stroke="#bcd" stroke-width="1.5" opacity=".6"/></g></svg>
  <svg class="a" style="left:390px;top:34.5px" width="35" height="35" viewBox="0 0 35 35"><defs><clipPath id="ta3"><circle cx="17.5" cy="17.5" r="13.6"/></clipPath></defs><circle cx="17.5" cy="17.5" r="16.3" fill="#fff" stroke="#22b84c" stroke-width="2.2"/><g clip-path="url(#ta3)"><rect width="35" height="35" fill="#000"/><circle cx="17.5" cy="17.5" r="11" fill="none" stroke="#ddd" stroke-width="1.3" stroke-dasharray="3 1.5"/><circle cx="17.5" cy="17.5" r="8.5" fill="none" stroke="#999" stroke-width=".8"/></g></svg>
  <!-- bottom chats -->
  <svg class="a" style="left:107px;top:1007px" width="60" height="60" viewBox="0 0 60 60">
    <circle cx="30" cy="30" r="27.5" fill="#c8c8c8" stroke="#b60d0d" stroke-width="4.5"/>
    <circle cx="30" cy="30" r="22.5" fill="#a80808"/>
    <path d="M12.6 37L20 29L30.2 34.8L30.2 46.6L18.5 48.8z" fill="#c8c8c8"/>
    <path d="M20 29L17 20M30.2 34.8L40 30M30.2 46.6L38 55M18.5 48.8L12 53M12.6 37L7 35M40 30L44 20M40 30L50 38M50 38L52 45M50 38L47 50" stroke="#c8c8c8" stroke-width="1.6" fill="none"/>
  </svg>
  <div class="a" style="left:182px;top:1042px;width:21px;height:21px;border-radius:3px;background:linear-gradient(180deg,#5a4a48,#4a6a3a)"></div>
  <svg class="a" style="left:188px;top:1046px" width="10" height="13" viewBox="0 0 10 13"><path d="M0 0L10 6.5L0 13z" fill="#eee"/></svg>
  <div class="t" style="left:209px;top:1044px;font-size:17.5px;color:#2b7cb5">Video</div>
  <div class="a" style="left:401px;top:1040px;width:30px;height:26px;border-radius:13px;background:#8f8f8f"></div>
  <div class="t" style="left:401px;top:1045px;width:30px;text-align:center;font-size:17px;color:#eee">39</div>
  <svg class="a" style="left:107px;top:1088px" width="60" height="60" viewBox="0 0 60 60">
    <defs><clipPath id="fc"><circle cx="30" cy="30" r="30"/></clipPath></defs>
    <g clip-path="url(#fc)">
      <rect width="60" height="60" fill="#e8e8e8"/>
      <rect width="24" height="60" fill="#1f6fc0"/>
      <path d="M34 0h8l4 60h-8z" fill="#d8261a"/>
      <path d="M50 0h8l6 60h-8z" fill="#d8261a"/>
      <circle cx="8" cy="12" r="1.5" fill="#fff"/><circle cx="16" cy="8" r="1.5" fill="#fff"/><circle cx="12" cy="20" r="1.5" fill="#fff"/>
    </g>
  </svg>
  <svg class="a" style="left:186px;top:1096px" width="14" height="12" viewBox="0 0 14 12"><path d="M0 4h3l8-4v12L3 8H0z M3 8l1 4h2L5 8z" fill="#111"/></svg>
  <div class="t" style="left:206px;top:1093px;font-size:17px;font-weight:normal;-webkit-text-stroke:.45px #000;color:#000;transform:scaleX(1.0);transform-origin:0 0">Donald J. Trump</div>
  <div class="t" style="left:386px;top:1094px;font-size:17px;color:#a0a0a0;transform:scaleX(1.05);transform-origin:0 0">23:29</div>
  <div class="a" style="left:444px;top:1035px;width:20px;height:71px;background:linear-gradient(180deg,#a9aa70,#d0d38a)"></div>
</div>

<!-- ============ DEVTOOLS ============ -->
<div class="a" style="left:291px;top:53px;width:1140px;height:983px;background:#33373b;border-radius:4px 4px 0 0;box-shadow:0 12px 45px 0 rgba(0,0,0,.75)" id="dt">
  <!-- title -->
  <svg class="a" style="left:8px;top:4px" width="20" height="20" viewBox="0 0 48 48">
    <path d="M24 0A24 24 0 0 1 44.78 12H24A12 12 0 0 0 13.61 18L3.22 12A24 24 0 0 1 24 0z" fill="#ea4335"/>
    <path d="M44.78 12A24 24 0 0 1 24 48L34.39 30A12 12 0 0 0 24 12z" fill="#fbbc04"/>
    <path d="M24 48A24 24 0 0 1 3.22 12L13.61 18A12 12 0 0 0 34.39 30z" fill="#34a853"/>
    <circle cx="24" cy="24" r="11.5" fill="#fff"/>
    <circle cx="24" cy="24" r="9.2" fill="#1a73e8"/>
  </svg>
  <svg class="a" style="left:36px;top:7px" width="14" height="14" viewBox="0 0 14 14">
    <path d="M6.5 4.5L10.5 0.8L13.2 3.5L9.5 7.5z" fill="#7f8b8d"/>
    <path d="M3.5 5.5L8.5 10.5" stroke="#7f8b8d" stroke-width="1.6"/>
    <path d="M5.5 5.5L8.5 8.5" stroke="#7f8b8d" stroke-width="3.5"/>
    <path d="M1.2 12.8L6 8" stroke="#7f8b8d" stroke-width="1.3"/>
  </svg>
  <div class="t" style="left:706px;top:7px;font-size:14px;color:#9aa0a6">DevTools - telepat.com/notes/</div>
  <!-- content -->
  <div class="a" style="left:4px;top:29px;width:1136px;height:950px;background:#fff;overflow:hidden">
    <!-- tabs -->
    <div class="a" style="left:0;top:0;width:1136px;height:40px;background:#ebf0f8;border-bottom:1px solid #d3e3fd"></div>
    <svg class="a" style="left:13px;top:9px" width="24" height="24" viewBox="0 0 24 24"><rect x="0.5" y="0.5" width="2.2" height="2.2" rx=".5" fill="#474747"/><rect x="5.0" y="0.5" width="2.2" height="2.2" rx=".5" fill="#474747"/><rect x="9.8" y="0.5" width="2.2" height="2.2" rx=".5" fill="#474747"/><rect x="14.5" y="0.5" width="2.2" height="2.2" rx=".5" fill="#474747"/><rect x="19.3" y="0.5" width="2.2" height="2.2" rx=".5" fill="#474747"/><rect x="0.5" y="5.0" width="2.2" height="2.2" rx=".5" fill="#474747"/><rect x="0.5" y="9.8" width="2.2" height="2.2" rx=".5" fill="#474747"/><rect x="0.5" y="14.6" width="2.2" height="2.2" rx=".5" fill="#474747"/><rect x="0.5" y="19.1" width="2.2" height="2.2" rx=".5" fill="#474747"/><rect x="5.0" y="19.1" width="2.2" height="2.2" rx=".5" fill="#474747"/><rect x="19.3" y="5.0" width="2.2" height="2.2" rx=".5" fill="#474747"/><path d="M10.6 21V10.6H21.3M10.6 10.6L20.5 20.5" fill="none" stroke="#474747" stroke-width="2.2"/></svg>
    <svg class="a" style="left:53px;top:11px" width="27" height="20" viewBox="0 0 27 20"><path d="M4.9 16.5V1.9Q4.9 1.3 5.5 1.3H23.2" fill="none" stroke="#474747" stroke-width="2.2"/><path d="M0.8 16.5H12.8" stroke="#474747" stroke-width="2.4"/><rect x="17.3" y="5.8" width="6.2" height="10.4" rx="1.2" fill="none" stroke="#474747" stroke-width="2.2"/></svg>
    <div class="a" style="left:94px;top:8px;width:2px;height:24px;background:#d3e3fd"></div>
    <div class="t tab" style="transform:scaleX(1.099);transform-origin:0 0;left:113px;top:13px;font-size:18px;color:#474747">Приложение</div>
    <div class="t tab" style="transform:scaleX(1.068);transform-origin:0 0;left:259px;top:13px;font-size:18px;color:#474747">Элементы</div>
    <div class="t tab" style="transform:scaleX(1.04);transform-origin:0 0;left:382px;top:13px;font-size:18px;color:#474747">Сеть</div>
    <div class="t tab" style="transform:scaleX(1.1);transform-origin:0 0;left:455px;top:13px;font-size:18px;color:#474747">Lighthouse</div>
    <div class="t tab" style="transform:scaleX(1.087);transform-origin:0 0;left:582px;top:13px;font-size:18px;color:#0b57d0">Консоль</div>
    <div class="a" style="left:566px;top:37px;width:108px;height:3px;border-radius:3px 3px 0 0;background:#0b57d0"></div>
    <div class="t tab" style="transform:scaleX(1.152);transform-origin:0 0;left:689px;top:13px;font-size:18px;color:#474747">Источники</div>
    <div class="t tab" style="transform:scaleX(1.098);transform-origin:0 0;left:819px;top:13px;font-size:18px;color:#474747">Память</div>
    <div class="t tab" style="transform:scaleX(1.102);transform-origin:0 0;left:918px;top:13px;font-size:18px;color:#474747">Производительность</div>
    <!-- toolbar -->
    <div class="a" style="left:0;top:80px;width:1136px;height:1px;background:#d3e3fd"></div>
    <svg class="a" style="left:13px;top:49px" width="22" height="22" viewBox="0 0 22 22"><rect x="1" y="1" width="20" height="20" rx="2" fill="none" stroke="#474747" stroke-width="2"/><path d="M7 1v20" stroke="#474747" stroke-width="2"/><path d="M10 7l6 4-6 4z" fill="#474747"/></svg>
    <svg class="a" style="left:54px;top:48px" width="24" height="24" viewBox="0 0 24 24"><circle cx="12" cy="12" r="10.5" fill="none" stroke="#474747" stroke-width="2"/><path d="M19 5L5 19" stroke="#474747" stroke-width="2"/></svg>
    <div class="a" style="left:93px;top:48px;width:2px;height:24px;background:#d3e3fd"></div>
    <div class="t" style="transform:scaleX(1.08);transform-origin:0 0;left:113px;top:52px;font-size:18px;color:#474747">top</div>
    <svg class="a" style="left:149px;top:58px" width="12" height="9" viewBox="0 0 12 9"><path d="M0 0h12L6 9z" fill="#474747"/></svg>
    <div class="a" style="left:176px;top:48px;width:2px;height:24px;background:#d3e3fd"></div>
    <svg class="a" style="left:191px;top:51px" width="27" height="18" viewBox="0 0 27 18"><path d="M1.2 9C4 3.5 8.5 1 13.5 1S23 3.5 25.8 9C23 14.5 18.5 17 13.5 17S4 14.5 1.2 9z" fill="none" stroke="#474747" stroke-width="2"/><circle cx="13.5" cy="9" r="3.5" fill="none" stroke="#474747" stroke-width="2"/></svg>
    <div class="a" style="left:232px;top:48px;width:2px;height:24px;background:#d3e3fd"></div>
    <div class="a" style="left:244px;top:45px;width:724px;height:30px;border-radius:15px;background:#ebf0f8"></div>
    <svg class="a" style="left:260px;top:52px" width="16" height="15" viewBox="0 0 16 15"><path d="M1.5 1.5h13L8 8.5z" fill="none" stroke="#474747" stroke-width="2" stroke-linejoin="round"/><path d="M8 8V14.5" stroke="#474747" stroke-width="2.6"/></svg>
    <div class="t" style="transform:scaleX(1.033);transform-origin:0 0;left:287px;top:52px;font-size:18px;color:#1f1f1f">message</div>
    <div class="a" style="left:931px;top:50px;width:19px;height:19px;border-radius:50%;background:#474747"></div>
    <svg class="a" style="left:935px;top:54px" width="11" height="11" viewBox="0 0 11 11"><path d="M2 2l7 7M9 2L2 9" stroke="#fff" stroke-width="1.8"/></svg>
    <div class="t" style="transform:scaleX(1.09);transform-origin:0 0;left:984px;top:52px;font-size:18px;color:#474747">Уровни по умолчанию</div>
    <!-- settings -->
    <div class="a" style="left:0;top:261px;width:1136px;height:1px;background:#d3e3fd"></div>
    <div class="cb a" style="left:9px;top:90px"></div>
    <div class="t" style="transform:scaleX(1.043);transform-origin:0 0;left:36px;top:91px;font-size:18px;color:#1f1f1f">Скрыть сеть</div>
    <div class="cbc a" style="left:9px;top:126px"><svg width="18" height="18" viewBox="0 0 18 18"><path d="M3.5 9.5l3.8 3.8L15 5.2" fill="none" stroke="#fff" stroke-width="2.6"/></svg></div>
    <div class="t" style="transform:scaleX(1.047);transform-origin:0 0;left:36px;top:127px;font-size:18px;color:#1f1f1f">Сохранять журнал</div>
    <div class="cb a" style="left:9px;top:162px"></div>
    <div class="t" style="transform:scaleX(1.069);transform-origin:0 0;left:36px;top:163px;font-size:18px;color:#1f1f1f">Только выбранный контекст</div>
    <div class="cb a" style="left:9px;top:198px"></div>
    <div class="t" style="transform:scaleX(1.079);transform-origin:0 0;left:36px;top:199px;font-size:18px;color:#1f1f1f">Группировать в консоли похожие сообщения</div>
    <div class="cb a" style="left:9px;top:234px"></div>
    <div class="t" style="transform:scaleX(1.048);transform-origin:0 0;left:36px;top:235px;font-size:18px;color:#1f1f1f">Показывать ошибки CORS в консоли</div>

    <div class="cb a" style="left:803px;top:90px"></div>
    <div class="t" style="transform:scaleX(1.076);transform-origin:0 0;left:830px;top:91px;font-size:18px;color:#1f1f1f">Регистрировать запросы XMLHttpRequest</div>
    <div class="cb a" style="left:803px;top:126px"></div>
    <div class="t" style="transform:scaleX(1.08);transform-origin:0 0;left:830px;top:127px;font-size:18px;color:#1f1f1f">Энергичное вычисление</div>
    <div class="cb a" style="left:803px;top:162px"></div>
    <div class="t" style="transform:scaleX(1.076);transform-origin:0 0;left:830px;top:163px;font-size:18px;color:#1f1f1f">Автозаполнение из истории</div>
    <div class="cb a" style="left:803px;top:198px"></div>
    <div class="t" style="transform:scaleX(1.085);transform-origin:0 0;left:830px;top:199px;font-size:18px;color:#1f1f1f">Рассматривать оценку кода как пользовательское действие</div>
    <svg class="a" style="left:18px;top:270px" width="10" height="14" viewBox="0 0 10 14"><path d="M2 1.5l5.5 5.5L2 12.5" fill="none" stroke="#1a73e8" stroke-width="2"/></svg>
  </div>
</div>
<style>
.cb{width:18px;height:18px;border:2px solid #737373;border-radius:3.5px;background:#fff}
.cbc{width:18px;height:18px;border-radius:3px;background:#1a6ef5}
.cbc svg{display:block}
#dt .t{-webkit-text-stroke:0.25px currentColor}
</style>
</body></html>
